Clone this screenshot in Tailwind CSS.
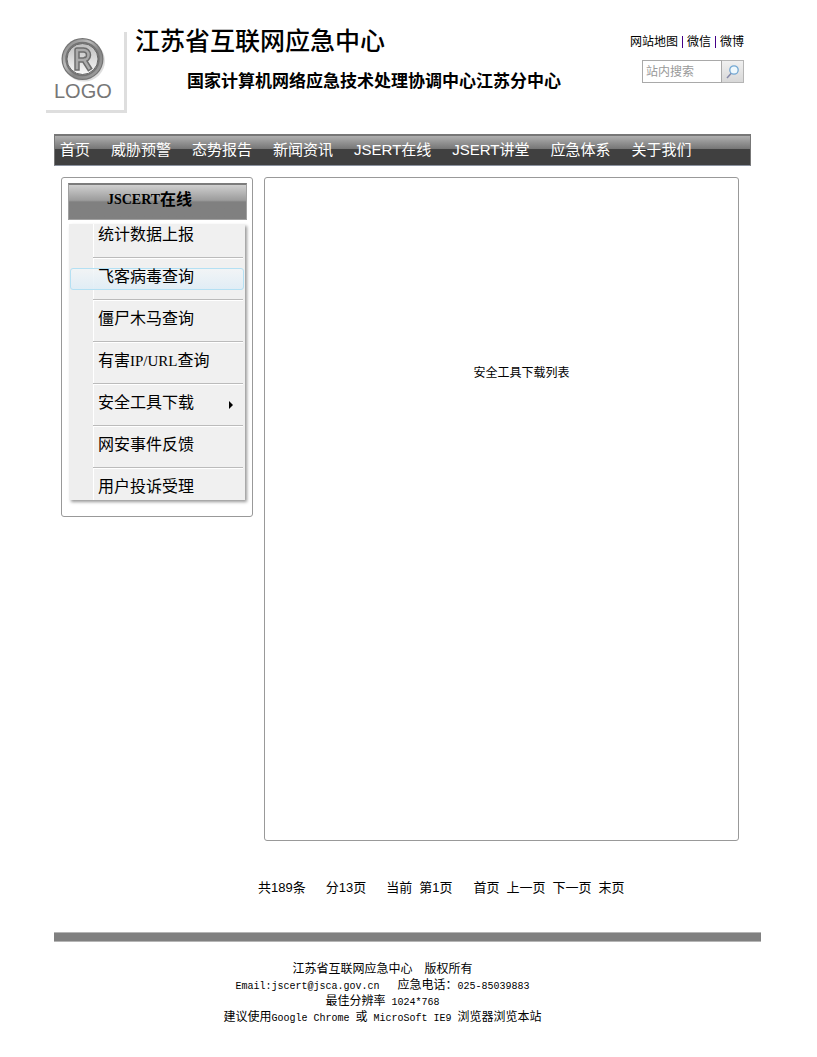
<!DOCTYPE html>
<html lang="zh-CN">
<head>
<meta charset="utf-8">
<meta name="viewport" content="width=device-width, initial-scale=1">
<title>江苏省互联网应急中心</title>
<script src="https://cdn.jsdelivr.net/npm/@tailwindcss/browser@4"></script>
</head>
<body class="bg-white text-black font-['Liberation_Sans','Noto_Sans_CJK_SC',sans-serif]">
<header class="flex h-[134px] items-start pl-[46px] pr-[73px] pt-8">
  <a href="#" aria-label="LOGO" class="block h-[81px] w-[81px] shrink-0 border-r-[3px] border-b-[3px] border-[#dedede]">
    <svg class="h-[78px] w-[78px]" viewBox="0 0 78 78">
      <defs>
        <linearGradient id="ring" x1="0" y1="0" x2="1" y2="1"><stop offset="0" stop-color="#808080"/><stop offset=".35" stop-color="#bbb"/><stop offset=".6" stop-color="#848484"/><stop offset="1" stop-color="#a4a4a4"/></linearGradient>
        <linearGradient id="disc" x1="0" y1="0" x2="0" y2="1"><stop offset="0" stop-color="#bcbcbc"/><stop offset="1" stop-color="#fafafa"/></linearGradient>
      </defs>
      <ellipse cx="38" cy="29" rx="21" ry="20.500" fill="#bbb" opacity=".5"/>
      <circle cx="36.500" cy="27" r="21" fill="#747474"/>
      <circle cx="36.500" cy="27" r="18.500" fill="none" stroke="url(#ring)" stroke-width="2.500"/>
      <circle cx="36.500" cy="27" r="15.500" fill="url(#disc)" stroke="#686868" stroke-width="1"/>
      <path d="M31 36V18h6.500a5 5 0 0 1 0 10H32M38 28l5 8" fill="none" stroke="#6c6c6c" stroke-width="5.500" stroke-linejoin="round" stroke-linecap="square"/>
      <path d="M31 36V18h6.500a5 5 0 0 1 0 10H32M38 28l5 8" fill="none" stroke="#aaa" stroke-width="2.500" stroke-linejoin="round" stroke-linecap="square"/>
      <text x="8" y="66" font-size="20" fill="#777">LOGO</text>
    </svg>
  </a>
  <div class="ml-2 -mt-2 flex-1 whitespace-nowrap">
    <h1 class="text-[25px] leading-[34px] font-medium">江苏省互联网应急中心</h1>
    <p class="mt-3 ml-[52px] text-[17px] leading-6 font-bold">国家计算机网络应急技术处理协调中心江苏分中心</p>
  </div>
  <div class="flex flex-col items-end whitespace-nowrap">
    <nav class="flex gap-1 text-[12px] leading-5" aria-label="快捷链接">
      <a href="#">网站地图</a><span class="w-px my-1 bg-[#408]"></span><a href="#">微信</a><span class="w-px my-1 bg-[#408]"></span><a href="#">微博</a>
    </nav>
    <form class="mt-2 flex h-[23px] w-[102px]">
      <input type="text" aria-label="站内搜索" placeholder="站内搜索" class="w-20 border border-[#a9a9a9] pl-[3px] text-[12px] leading-5 placeholder:text-[#999] outline-none">
      <button type="button" aria-label="搜索" class="flex w-[22px] items-center justify-center border border-l-0 border-[#b5b5b5] bg-linear-to-b from-[#f0f0f0] to-[#d8d8d8]">
        <svg class="h-4 w-4" viewBox="0 0 16 16" fill="none"><path d="M2 14l4.500-5" stroke="#8588a8" stroke-width="1.500"/><circle cx="9" cy="6" r="4.200" fill="#eef8fd" stroke="#72a7d2" stroke-width="1.300"/></svg>
      </button>
    </form>
  </div>
</header>

<div class="pl-[54px] pr-[56px]">
  <nav aria-label="主导航" class="mr-[10px] flex h-8 items-center gap-[21px] border border-t-2 border-[#777] border-b-[#8c93a0] bg-linear-to-b from-[#b0b0b0] via-[#757575] via-45% to-[#404040] to-46% pl-[5px] text-[15px] whitespace-nowrap text-white">
    <a href="#">首页</a><a href="#">威胁预警</a><a href="#">态势报告</a><a href="#">新闻资讯</a><a href="#">JSERT在线</a><a href="#">JSERT讲堂</a><a href="#">应急体系</a><a href="#">关于我们</a>
  </nav>

  <div class="mt-[11px] ml-[7px] mr-[22px] flex items-start gap-[11px]">
    <aside class="w-48 shrink-0 rounded-[3px] border border-[#999] px-[6px] pt-[5px] pb-4">
      <h2 class="flex h-[37px] w-[179px] justify-center border border-t-2 border-[#a0a0a0] border-t-[#7c7c7c] bg-linear-to-b from-[#d0d0d0] via-[#9c9c9c] via-45% to-[#808080] to-50% pr-4 text-[16px] leading-[30px] font-bold"><span class="font-['Liberation_Serif'] text-[14px]">JSCERT</span>在线</h2>
      <ul class="ml-px mt-1 grid w-44 grid-cols-1 bg-[linear-gradient(to_right,#eee_24px,#fff_24px,#fff_25px,#f0f0f0_25px)] pt-[2px] text-[16px] leading-[18px] shadow-[2px_2px_3px_#999]">
        <li><a href="#" class="block h-[22px] pl-[29px]">统计数据上报</a></li>
        <li class="my-[9px] ml-6 mr-[2px] h-[2px] border-t border-b border-t-[#bbb] border-b-white" role="separator"></li>
        <li><a href="#" class="mx-px block h-[22px] rounded-[3px] border border-[#b4e0f3] bg-linear-to-b from-[#f2f5f7]/80 to-[#dfedf6]/90 pl-[27px] leading-4">飞客病毒查询</a></li>
        <li class="my-[9px] ml-6 mr-[2px] h-[2px] border-t border-b border-t-[#bbb] border-b-white" role="separator"></li>
        <li><a href="#" class="block h-[22px] pl-[29px]">僵尸木马查询</a></li>
        <li class="my-[9px] ml-6 mr-[2px] h-[2px] border-t border-b border-t-[#bbb] border-b-white" role="separator"></li>
        <li><a href="#" class="block h-[22px] pl-[29px]">有害<span class="font-['Liberation_Serif'] text-[15px]">IP/URL</span>查询</a></li>
        <li class="my-[9px] ml-6 mr-[2px] h-[2px] border-t border-b border-t-[#bbb] border-b-white" role="separator"></li>
        <li><a href="#" class="flex h-[22px] justify-between pl-[29px] pr-3">安全工具下载<svg class="mt-[7px] h-2 w-1" viewBox="0 0 4 8"><path d="M0 0l4 4-4 4z"/></svg></a></li>
        <li class="my-[9px] ml-6 mr-[2px] h-[2px] border-t border-b border-t-[#bbb] border-b-white" role="separator"></li>
        <li><a href="#" class="block h-[22px] pl-[29px]">网安事件反馈</a></li>
        <li class="my-[9px] ml-6 mr-[2px] h-[2px] border-t border-b border-t-[#bbb] border-b-white" role="separator"></li>
        <li><a href="#" class="block h-[22px] pl-[29px]">用户投诉受理</a></li>
      </ul>
    </aside>
    <main class="min-h-[664px] flex-1 rounded-[3px] border border-[#999] pt-[186px] pl-10 text-center text-[12px] leading-[18px]">安全工具下载列表</main>
  </div>

  <nav aria-label="分页" class="mt-[37px] ml-[204px] flex text-[13px] leading-5 whitespace-nowrap">
    <span>共189条</span><span class="ml-5">分13页</span><span class="ml-5">当前</span><span class="ml-[7px]">第1页</span>
    <a href="#" class="ml-[21px]">首页</a><a href="#" class="ml-[7px]">上一页</a><a href="#" class="ml-[7px]">下一页</a><a href="#" class="ml-[7px]">末页</a>
  </nav>

  <footer class="mt-[34px]">
    <div class="h-[10px] border-y border-[#b5b5b5] bg-[#808080]"></div>
    <div class="mt-[19px] pr-[50px] text-center text-[12px] leading-4 [&_p]:h-4 [&_p]:whitespace-pre [&_span]:font-['Liberation_Mono'] [&_span]:text-[10px]">
      <p>江苏省互联网应急中心　版权所有</p>
      <p><span>Email:jscert@jsca.gov.cn   </span>应急电话：<span>025-85039883</span></p>
      <p>最佳分辨率<span> 1024*768</span></p>
      <p>建议使用<span>Google Chrome </span>或<span> MicroSoft IE9 </span>浏览器浏览本站</p>
    </div>
  </footer>
</div>
</body>
</html>
